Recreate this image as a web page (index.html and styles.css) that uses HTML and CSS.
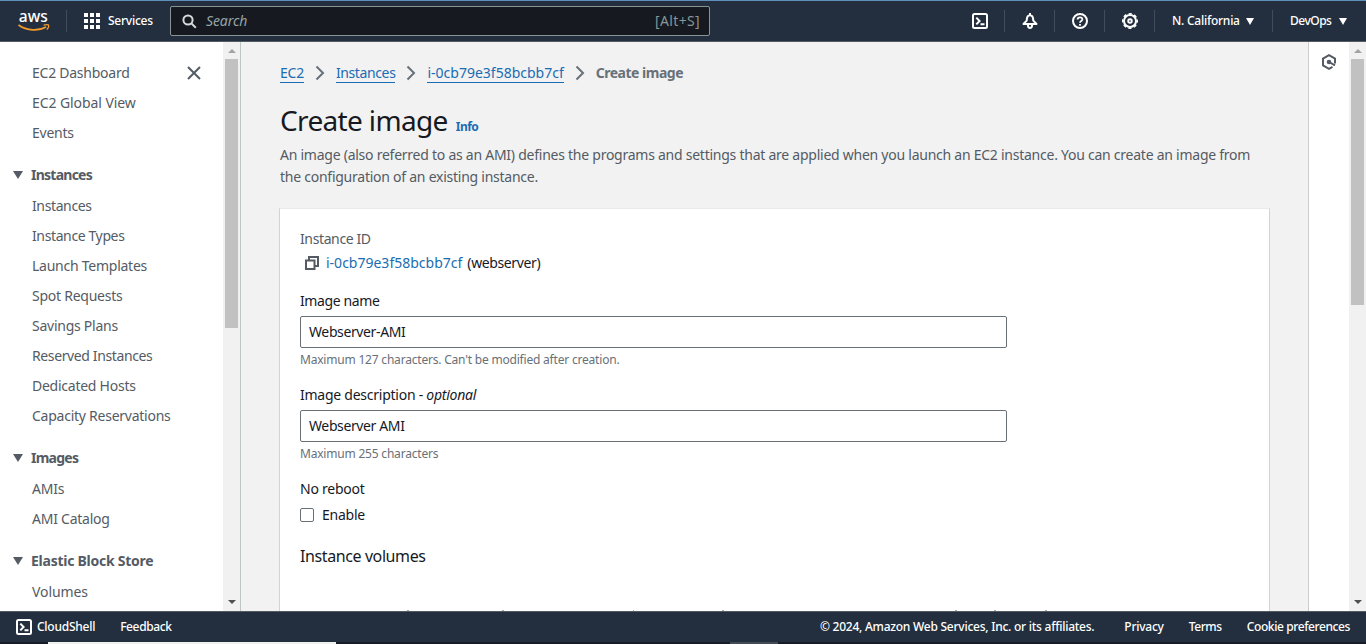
FILE: index.html
```html
<!DOCTYPE html>
<html lang="en">
<head>
<meta charset="utf-8">
<title>Create image | EC2</title>
<link rel="stylesheet" href="styles.css">
</head>
<body>
<header class="topbar">
  <svg class="logo" width="32" height="32" viewBox="0 -5 32 32"><text class="logo-text" x="0.800" y="12" textLength="29" lengthAdjust="spacingAndGlyphs">aws</text><path d="M0.500 15C9 21.200 21 21 28 17" fill="none" stroke="#f49b2c" stroke-width="1.700"/><path d="M25.600 15.200C28.300 14.400 30 14.400 30.500 15C31 16 30 18.200 28.800 19.600" fill="none" stroke="#f49b2c" stroke-width="1.300"/></svg>
  <i class="sep sep-logo"></i>
  <div class="services">
    <svg width="16" height="16" viewBox="0 0 16 16" fill="#fff"><path d="M0 0h4v4H0zM6 0h4v4H6zM12 0h4v4h-4zM0 6h4v4H0zM6 6h4v4H6zM12 6h4v4h-4zM0 12h4v4H0zM6 12h4v4H6zM12 12h4v4h-4z"/></svg>
    <span class="t-services">Services</span>
  </div>
  <div class="search">
    <svg width="15" height="15" viewBox="0 0 15 15" fill="none" stroke="#d5dbdb" stroke-width="2"><circle cx="6" cy="6" r="4.600"/><path d="M9.400 9.400l4.400 4.400"/></svg>
    <span class="placeholder">Search</span>
    <span class="shortcut">[Alt+S]</span>
  </div>
  <div class="tools">
    <span class="tool"><svg width="16" height="16" viewBox="0 0 16 16" fill="none" stroke="#fff" stroke-width="2"><rect x="1" y="1" width="14" height="14" rx="1.500"/><path d="M4.300 4.600L7.600 8l-3.300 3.400M8.500 11.200h4"/></svg></span>
    <span class="tool"><svg width="16" height="16" viewBox="0 0 16 16" fill="none" stroke="#fff" stroke-width="2" stroke-linejoin="round"><path d="M8 0v2M1.500 11h13L11.300 7.600C11.200 4 10 2.200 8 2.200S4.800 4 4.700 7.600zM6 11.500v1.300C6 15.600 10 15.600 10 12.800V11.500"/></svg></span>
    <span class="tool"><svg width="16" height="16" viewBox="0 0 16 16" fill="none" stroke="#fff" stroke-width="2"><circle cx="8" cy="8" r="7"/><path d="M5.600 6.600C5.600 3.600 10.400 3.600 10.400 6.300C10.400 8 8 7.900 8 9.800M8 11v1.800" stroke-width="1.800"/></svg></span>
    <span class="tool"><svg width="16" height="16" viewBox="0 0 16 16" fill="none" stroke="#fff"><circle cx="8" cy="8" r="6" stroke-width="2"/><circle cx="8" cy="8" r="7.300" stroke-width="1.400" stroke-dasharray="3.300 2.434" stroke-dashoffset="1.650"/><circle cx="8" cy="8" r="1.800" stroke-width="1.900"/></svg></span>
    <span class="menu region"><span class="t-region">N. California</span><i class="caret"></i></span>
    <span class="menu account"><span class="t-devops">DevOps</span><i class="caret"></i></span>
  </div>
</header>
<div class="body">
  <nav class="sidebar">
    <div class="nav">
      <div class="item first"><span>EC2 Dashboard</span><svg width="14" height="14" viewBox="0 0 14 14" stroke="#545b64" stroke-width="2"><path d="M1 1l12 12M13 1L1 13"/></svg></div>
      <div class="item"><span class="loose">EC2 Global View</span></div>
      <div class="item"><span>Events</span></div>
      <div class="group short"><i class="arrow"></i><span>Instances</span></div>
      <div class="item"><span class="tight">Instances</span></div>
      <div class="item"><span class="tight">Instance Types</span></div>
      <div class="item"><span>Launch Templates</span></div>
      <div class="item"><span>Spot Requests</span></div>
      <div class="item"><span>Savings Plans</span></div>
      <div class="item"><span class="tight">Reserved Instances</span></div>
      <div class="item"><span>Dedicated Hosts</span></div>
      <div class="item"><span>Capacity Reservations</span></div>
      <div class="group short"><i class="arrow"></i><span>Images</span></div>
      <div class="item"><span>AMIs</span></div>
      <div class="item"><span>AMI Catalog</span></div>
      <div class="group"><i class="arrow"></i><span>Elastic Block Store</span></div>
      <div class="item"><span class="loose">Volumes</span></div>
    </div>
    <div class="scroll"><i class="up"></i><i class="thumb thumb-nav"></i><i class="down"></i></div>
  </nav>
  <main class="main">
    <div class="crumbs">
      <a>EC2</a><svg class="chev" width="10" height="16" viewBox="0 0 10 16"><path d="M1.500 1.500L8 8l-6.500 6.500"/></svg><a class="tight">Instances</a><svg class="chev" width="10" height="16" viewBox="0 0 10 16"><path d="M1.500 1.500L8 8l-6.500 6.500"/></svg><a class="id">i-0cb79e3f58bcbb7cf</a><svg class="chev" width="10" height="16" viewBox="0 0 10 16"><path d="M1.500 1.500L8 8l-6.500 6.500"/></svg><b>Create image</b>
    </div>
    <div class="title"><h1>Create image</h1><a class="info">Info</a></div>
    <p class="lead"><span>An image (also referred to as an AMI) defines the programs and settings that are applied when you launch an EC2 instance. You can create an image from</span><br><span>the configuration of an existing instance.</span></p>
    <section class="card">
      <div class="row grey"><span class="tight">Instance ID</span></div>
      <div class="row idrow"><svg width="14" height="14" viewBox="0 0 14 14" fill="none" stroke="#545b64" stroke-width="2"><path d="M1 4.500h8.500V13H1zM4 4.500V1h9v9H9.500"/></svg><a class="id">i-0cb79e3f58bcbb7cf</a><span class="tight">(webserver)</span></div>
      <div class="row name"><span class="tight">Image name</span></div>
      <div class="input"><span class="tight">Webserver-AMI</span></div>
      <div class="hint"><span>Maximum 127 characters. Can't be modified after creation.</span></div>
      <div class="row"><span>Image description - <em>optional</em></span></div>
      <div class="input"><span class="tight">Webserver AMI</span></div>
      <div class="hint"><span>Maximum 255 characters</span></div>
      <div class="row"><span>No reboot</span></div>
      <div class="row check"><i class="box"></i><span>Enable</span></div>
      <div class="volumes"><span>Instance volumes</span></div>
      <svg class="tips" width="949" height="1" fill="#a5aaad"><path d="M107 0h2v1h-2zM202 0h2v1h-2zM333 0h1v1h-1zM422 0h2v1h-2zM655 0h2v1h-2zM694 0h2v1h-2zM745 0h2v1h-2z"/></svg>
    </section>
  </main>
  <aside class="rail"><svg width="16" height="16" viewBox="0 0 16 16" fill="none" stroke="#545b64" stroke-width="2"><path d="M14 9.500V4.500L8 1.200 2 4.500v7L8 14.800l3.500-1.900M8 8l6 3.400"/><circle cx="8" cy="8" r="1.300" fill="#545b64"/></svg></aside>
  <div class="scroll page-scroll"><i class="up"></i><i class="thumb thumb-page"></i><i class="down"></i></div>
</div>
<footer class="footer">
  <svg width="16" height="16" viewBox="0 0 16 16" fill="none" stroke="#fff" stroke-width="2"><rect x="1" y="1" width="14" height="14" rx="1.500"/><path d="M4.300 4.600L7.600 8l-3.300 3.400M8.500 11.200h4"/></svg>
  <span class="f1">CloudShell</span><span class="f2">Feedback</span>
  <span class="f3">© 2024, Amazon Web Services, Inc. or its affiliates.</span><span class="f4">Privacy</span><span class="f5">Terms</span><span class="f6">Cookie preferences</span>
</footer>
<div class="edge"><i class="edge-light"></i><i class="edge-grey"></i></div>
</body>
</html>
```
FILE: styles.css
```css
* { box-sizing: border-box; }
body { margin: 0; width: 1366px; height: 644px; overflow: hidden; display: flex; flex-direction: column; font: 14px/22px "Noto Sans", "Open Sans", sans-serif; letter-spacing: -.25px; color: #16191f; background: #fff; }
span, a, b, h1 { white-space: nowrap; }
svg { flex: none; }
i { display: block; flex: none; }
a { color: #1a6cb3; }
.tight { letter-spacing: -.38px; }
.loose { letter-spacing: -.08px; }
.id { letter-spacing: 0; }

.topbar { height: 42px; flex: none; display: flex; align-items: center; background: #232f3e; border-top: 1px solid #5f8fb8; border-bottom: 1px solid #545b64; padding-left: 18px; color: #fff; font-size: 12px; font-weight: 500; }
.logo-text { font: 500 16px "Noto Sans", sans-serif; letter-spacing: 0; fill: #fff; }
.sep { width: 1px; height: 22px; background: #414d5c; }
.sep-logo { margin: 0 17px 0 16px; }
.services { display: flex; align-items: center; gap: 8px; width: 86px; }
.search { width: 540px; height: 30px; display: flex; align-items: center; background: #16191f; border: 1px solid #879596; border-radius: 2px; padding: 0 9px 0 11px; }
.search span { font-size: 14px; font-weight: 400; }
.placeholder { flex: 1; margin-left: 9px; font-style: italic; color: #95a5a6; letter-spacing: -.1px; }
.shortcut { color: #879596; letter-spacing: .35px; }
.tools { margin-left: auto; display: flex; align-items: center; }
.tool { width: 50px; height: 22px; display: flex; align-items: center; justify-content: center; border-right: 1px solid #414d5c; }
.menu { height: 22px; display: flex; align-items: center; gap: 6px; padding: 0 18px 0 17px; }
.account { padding-right: 19px; }
.t-region { width: 68px; }
.t-devops { width: 43px; letter-spacing: -.5px; }
.region { border-right: 1px solid #414d5c; }
.caret { border: 4px solid transparent; border-top: 7px solid #fff; border-bottom: 0; }

.body { height: 569px; flex: none; display: flex; overflow: hidden; }
.sidebar { width: 241px; display: flex; border-right: 1px solid #bfc6c6; color: #545b64; }
.nav { width: 223px; padding-top: 16px; }
.item { height: 30px; display: flex; align-items: center; padding-left: 32px; }
.first { justify-content: space-between; padding-right: 22px; }
.group { height: 30px; margin: 12px 0 1px; display: flex; align-items: center; padding-left: 13px; gap: 8px; font-weight: 700; }
.short { letter-spacing: -.75px; }
.arrow { border: 5px solid transparent; border-top: 8px solid #545b64; border-bottom: 0; }
.scroll { width: 17px; height: 569px; flex: none; background: #f1f1f1; display: flex; flex-direction: column; align-items: center; }
.up { margin: 7px 0 8px; border: 4px solid transparent; border-top: 0; border-bottom: 4px solid #a3a3a3; }
.down { margin: auto 0 7px; border: 4px solid transparent; border-bottom: 0; border-top: 4px solid #505050; }
.thumb { width: 13px; background: #c1c1c1; margin-top: -2px; }
.thumb-nav { height: 269px; }
.thumb-page { height: 246px; }

.main { width: 1067px; background: #f2f2f2; padding: 20px 38px 0; display: flex; flex-direction: column; flex: none; }
.crumbs { height: 22px; display: flex; align-items: center; padding-left: 1px; }
.crumbs a { line-height: 20px; height: 20px; border-bottom: 1px solid #1a6cb3; }
.chev { margin: 0 11px; fill: none; stroke: #687078; stroke-width: 2; }
.crumbs b { color: #687078; letter-spacing: -.5px; }
.title { display: flex; align-items: baseline; margin-top: 18px; height: 37px; padding-left: 1px; gap: 8px; }
h1 { margin: 0; font-size: 28px; line-height: 36px; font-weight: 400; letter-spacing: -.65px; }
.info { font-size: 12px; font-weight: 700; letter-spacing: -.5px; }
.lead { margin: 5px 0 20px 1px; color: #545b64; }
.card { width: 991px; height: 403px; background: #fff; border: 1px solid #d0d4d4; border-top-color: #e8eaea; border-bottom: 0; padding: 19px 20px 0; display: flex; flex-direction: column; flex: none; }
.row { height: 22px; display: flex; align-items: center; }
.grey { color: #545b64; }
.idrow { margin-top: 2px; padding-left: 5px; }
.idrow a { margin: 0 5px 0 7px; }
.name { margin-top: 16px; }
.input { width: 707px; height: 32px; margin-top: 4px; border: 1px solid #687078; border-radius: 2px; padding-left: 8px; display: flex; align-items: center; }
.hint { height: 24px; margin-bottom: 12px; display: flex; align-items: center; font-size: 12px; letter-spacing: -.2px; color: #687078; }
.check { margin-top: 4px; gap: 8px; }
.box { width: 14px; height: 14px; border: 1px solid #687078; border-radius: 2px; }
.volumes { margin-top: 19px; height: 22px; font-size: 16px; letter-spacing: -.4px; display: flex; align-items: center; }
.tips { margin-top: auto; }
.rail { width: 41px; border-left: 1px solid #ccc; padding: 12px 0 0 12px; }

.footer { height: 31px; flex: none; background: #232f3e; border-top: 1px solid #545b64; display: flex; align-items: center; padding: 0 16px; color: #fff; font-size: 12px; font-weight: 500; }
.f1 { margin-left: 5px; }
.f2 { margin-left: 25px; letter-spacing: -.38px; }
.f3 { margin-left: auto; }
.f4 { margin-left: 30px; }
.f5, .f6 { margin-left: 25px; letter-spacing: -.4px; }
.edge { height: 2px; background: #161b25; display: flex; }
.edge-light { margin-left: 48px; width: 288px; background: #f1f1f1; }
.edge-grey { margin-left: 394px; width: 48px; background: #454b55; }
```
